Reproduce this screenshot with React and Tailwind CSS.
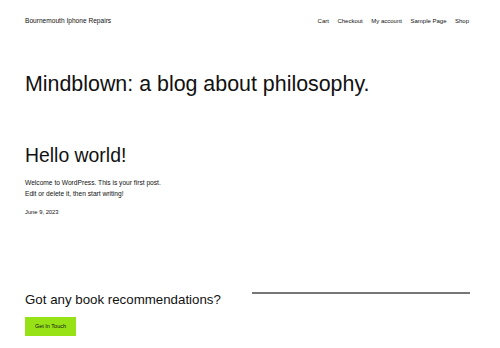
export default function App() {
  const nav = ['Cart', 'Checkout', 'My account', 'Sample Page', 'Shop']

  return (
    <div className="min-h-[450px] bg-white text-[#111] font-['Liberation_Sans',Arial,sans-serif]">
      <header className="flex justify-between items-start pl-[25px] pr-[31px] pt-[16px] h-[40px]">
        <div className="text-[6.6px] leading-[10px]">Bournemouth Iphone Repairs</div>
        <nav className="flex gap-[8.5px] text-[6px] leading-[10px]">
          {nav.map(item => (
            <a key={item}>{item}</a>
          ))}
        </nav>
      </header>

      <main className="pl-[25px] pr-[30px]">
        <h1 className="mt-[31px] text-[21.4px] leading-[26px]">Mindblown: a blog about philosophy.</h1>

        <article className="mt-[47px]">
          <h2 className="text-[19.4px] leading-[22px]">Hello world!</h2>
          <div className="mt-[12px] text-[6.65px] leading-[10.5px]">
            <p>Welcome to WordPress. This is your first post.</p>
            <p>Edit or delete it, then start writing!</p>
          </div>
          <div className="mt-[9px] text-[5.8px] leading-[8px]">June 9, 2023</div>
        </article>

        <section className="mt-[75px] flex justify-between items-start">
          <div>
            <h3 className="text-[13.3px] leading-[18px]">Got any book recommendations?</h3>
            <button className="mt-[8px] bg-[#96e217] w-[51px] h-[19px] text-[5.5px] text-[#111]">Get In Touch</button>
          </div>
          <hr className="mt-[1px] w-[218px] border-t-[2px] border-[#777]" />
        </section>
      </main>
    </div>
  )
}
